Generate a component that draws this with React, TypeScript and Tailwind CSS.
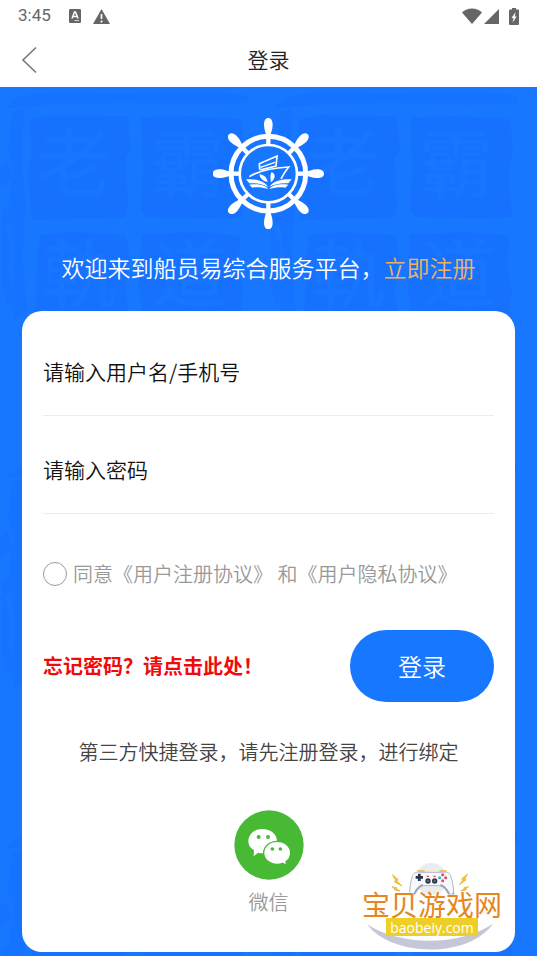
import type { ReactNode } from "react";

const HANDLES = [0, 45, 90, 135, 180, 225, 270, 315];

function StatusBar() {
  return (
    <div className="flex h-8 items-center px-[18px] font-['Roboto','Noto_Sans_CJK_SC',sans-serif] text-[17px] font-normal text-[#666]">
      <span>3:45</span>
      <svg className="ml-[18px] h-[14px] w-3" viewBox="0 0 12 14" aria-hidden="true">
        <rect width="12" height="14" rx="1.2" fill="#666" />
        <path d="M3 9.5 5.5 3h1L9 9.5M4 7.5h4" fill="none" stroke="#fff" strokeWidth="1.5" />
        <path d="M5.5 11.6H10" stroke="#fff" strokeWidth="0.8" />
      </svg>
      <svg className="ml-3 h-[15px] w-[17px]" viewBox="0 0 17 15" aria-hidden="true">
        <path d="M8.5 0 17 15H0z" fill="#666" />
        <path d="M8.5 5v5M8.5 11.4v2" stroke="#fff" strokeWidth="1.7" />
      </svg>
      <svg className="ml-auto h-4 w-5" viewBox="0 0 20 16" aria-hidden="true">
        <path d="M0 4.5C5.5-.9 14.5-.9 20 4.5L10 16z" fill="#666" />
      </svg>
      <svg className="ml-[2px] h-[15px] w-[15px]" viewBox="0 0 15 15" aria-hidden="true">
        <path d="M15 0v15H0z" fill="#666" />
      </svg>
      <svg className="ml-[10px] h-[17px] w-[10px]" viewBox="0 0 10 17" aria-hidden="true">
        <path d="M3 0h4v1.6h2a1 1 0 0 1 1 1V16a1 1 0 0 1-1 1H1a1 1 0 0 1-1-1V2.6a1 1 0 0 1 1-1h2z" fill="#666" />
        <path d="M6.6 4 2.5 10h2L3.6 14.6 7.7 8.5h-2z" fill="#fff" />
      </svg>
    </div>
  );
}

function NavBar() {
  return (
    <header className="grid h-[55px] grid-cols-[60px_1fr_60px] items-center">
      <button type="button" aria-label="返回" className="flex h-full items-center pl-[21px]">
        <svg className="h-7 w-4" viewBox="0 0 16 28" fill="none" stroke="#777" strokeWidth="1.6">
          <path d="M15 1.5 2 14l13 12.5" />
        </svg>
      </button>
      <h1 className="pb-[2px] text-center text-[21px] leading-8 text-[#222]">登录</h1>
    </header>
  );
}

// faint seal-stamp texture behind the form
function SealBackdrop() {
  return (
    <svg className="absolute inset-0 h-full w-full" aria-hidden="true">
      <defs>
        <pattern id="seal" width="269" height="370" patternUnits="userSpaceOnUse">
          <rect width="269" height="370" fill="#1877ff" />
          <path
            d="M22 8 60 5l60 2 70-3 58 4 2 8-50 2-80-2-70 2-48 4zM0 80l8-6 4 16-6 8-6 2zM2 124l10-8 2 18-9 6 7 22-4 20 7 28-9 8-4-20zM12 24l12-3-2 60 4 30-3 60 4 52-12 10-5-18 5-40-6-60 4-34-5-18z"
            fill="#1673ff"
          />
          <path
            d="m30 32 22-4 76 1 3 34-5 8 2 50-3 10-79 2-14 0-4-44 3-20zM141 30l46-1 54 3 3 28-4 30 3 40-34 2-64-2-4-8 2-40zM40 148l30-3 56 3 4 20-4 34 3 28-74 3-20-2 2-60zM141 147l58-2 42 4-3 30 5 24-3 26-68 2-30-1-3-30z"
            fill="#1671ff"
          />
          <g fill="#1775ff" stroke="#1775ff" fontSize="74" className="font-['Noto_Sans_CJK_SC',sans-serif]">
            <text x="37" y="103">老</text>
            <text x="150" y="104">霸</text>
            <text x="42" y="214">軌</text>
            <text x="153" y="214">道</text>
          </g>
        </pattern>
      </defs>
      <rect width="100%" height="100%" fill="url(#seal)" />
    </svg>
  );
}

function HelmLogo() {
  return (
    <svg className="h-[111px] w-[111px]" viewBox="39 38 333 333" fill="none" stroke="#fff" role="img" aria-label="船员易">
      <circle cx="205" cy="205" r="112" strokeWidth="15" />
      <circle cx="205" cy="205" r="86" strokeWidth="8" />
      {HANDLES.map((deg) => (
        <g key={deg} transform={`rotate(${deg} 205 205)`}>
          <path d="M205 86v32" strokeWidth="13" />
          <path
            d="M199 96c0-12-7-22-7-38 0-12 5-20 13-20s13 8 13 20c0 16-7 26-7 38z"
            fill="#fff"
            stroke="none"
          />
        </g>
      ))}
      <path d="m179 192-1-17 53-23-3 30-49 12" strokeWidth="5" />
      <path d="m181 186 44-15" strokeWidth="4" />
      <path d="M148 214c24-16 62-25 118-29-10 12-16 22-23 36" strokeWidth="5" />
      <path d="M178 207c14 2 22 8 25 23-14-3-23-10-25-23zM214 201c15 3 12 23-2 30 1-10-3-18 2-30z" fill="#fff" stroke="none" />
      <g fill="#fff" stroke="none">
        <path d="M138 222c24-2 54 2 67 23-18-10-37-13-57-11z" />
        <path d="M148 238c23-3 45-1 57 13-18-5-32-6-48-4z" />
        <path d="M275 222c-24-2-54 2-67 23 18-10 37-13 57-11z" />
        <path d="M265 238c-23-3-45-1-57 13 18-5 32-6 48-4z" />
      </g>
    </svg>
  );
}

function Field({ id, label, type = "text" }: { id: string; label: string; type?: string }) {
  return (
    <input
      id={id}
      name={id}
      type={type}
      aria-label={label}
      placeholder={label}
      className="block h-[85px] w-full border-b border-[#ececec] bg-transparent pb-1 text-[21px] text-[#111] outline-none placeholder:text-[#111] placeholder:opacity-100"
    />
  );
}

function Agreement({ children }: { children: ReactNode }) {
  return (
    <a href="#agreement" className="text-[#999]">
      {children}
    </a>
  );
}

function WechatIcon() {
  return (
    <svg className="h-[70px] w-[70px]" viewBox="0 0 210 210" aria-hidden="true">
      <circle cx="105" cy="105" r="104" fill="#48b934" />
      <path
        d="M85 57c25 0 44 16 44 36s-19 37-44 37c-5 0-9-1-13-2l-13 11 1-18C49 115 43 105 43 94c0-21 18-37 42-37z"
        fill="#fff"
      />
      <path
        d="M129 94c24 0 41 15 41 35 0 11-5 20-14 26l2 12-12-7c-5 2-11 3-17 3-22 0-40-15-40-34s18-35 40-35z"
        fill="#fff"
        stroke="#48b934"
        strokeWidth="4"
      />
      <g fill="#48b934">
        <circle cx="74" cy="81" r="6" />
        <circle cx="102" cy="81" r="6" />
        <circle cx="115" cy="117" r="5.5" />
        <circle cx="139" cy="117" r="5.5" />
      </g>
    </svg>
  );
}

function SiteBadge() {
  return (
    <div className="absolute right-[35px] bottom-1 flex w-[140px] flex-col items-center">
      <svg className="absolute inset-x-0 bottom-0 h-[90px] w-[140px]" viewBox="0 0 420 270" aria-hidden="true">
        <circle cx="208" cy="51" r="48" fill="#ececee" />
        <path
          d="M152 40c4-9 14-11 24-9h66c11-2 20 0 24 10 6 18 9 36 9 54 0 8-8 10-13 4-8-12-16-26-28-28h-50c-12 2-20 16-28 28-5 6-13 4-13-4 0-18 3-38 9-55z"
          fill="#f7f8fc"
          stroke="#b4b8c8"
          strokeWidth="3"
        />
        <path
          d="M144 92c0 12 8 12 14 2 6-12 14-22 25-25M274 92c0 12-8 12-14 2-6-12-14-22-25-25"
          fill="none"
          stroke="#a0a4b8"
          strokeWidth="6"
        />
        <path d="M166 27h22M232 27h22" stroke="#edb640" strokeWidth="5" />
        <path d="M172 35v22M161 46h22" stroke="#26364c" strokeWidth="8" />
        <g stroke="#26364c" strokeWidth="4" fill="#52667b">
          <circle cx="198" cy="57" r="6" />
          <circle cx="218" cy="57" r="6" />
        </g>
        <path d="M194 43h7M214 43h7" stroke="#ef4455" strokeWidth="4" />
        <circle cx="242" cy="38" r="4.5" fill="#e54661" />
        <circle cx="242" cy="56" r="4.5" fill="#e54661" />
        <circle cx="233" cy="47" r="4.5" fill="#2eb1bc" />
        <circle cx="251" cy="47" r="4.5" fill="#e54661" />
        <path
          d="m91 38 17 14-2 6 14 14-22-12 2-6zM90 74l14 3v4l10 6-16-3-1-4zM317 36l-18 14 3 5-10 13 20-14-3-5zM320 74l-14 3v4l-10 6 16-3 1-4z"
          fill="#f8c62e"
          stroke="#eaa72b"
          strokeWidth="2"
        />
        <path d="M15 187c100 66 276 66 378-2-72 103-302 103-378 2z" fill="#c5c7d7" />
      </svg>
      <span className="relative text-[28px] leading-7 font-normal whitespace-nowrap text-[#e6871d] [text-shadow:0_0_2px_#fff,0_0_2px_#fff]">
        宝贝游戏网
      </span>
      <span className="relative mb-4 flex h-[18px] items-center bg-[#edcf28] px-1 font-['Open_Sans',sans-serif] text-[14px] font-medium text-white">
        baobeiy.com
      </span>
    </div>
  );
}

export default function App() {
  return (
    <div className="flex min-h-screen flex-col bg-white font-['Noto_Sans_CJK_SC',sans-serif] font-[350]">
      <StatusBar />
      <NavBar />
      <main className="relative flex-1 bg-[#1877ff] px-[22px] pt-[31px] pb-1">
        <SealBackdrop />
        <div className="relative flex flex-col items-center">
          <HelmLogo />
          <p className="mt-[22px] text-[23px] leading-8 whitespace-nowrap text-white">
            欢迎来到船员易综合服务平台，
            <a href="#register" className="text-[#efb15c]">
              立即注册
            </a>
          </p>
        </div>

        <form className="relative mt-7 rounded-[20px] bg-white px-[21px] pt-5 pb-9" onSubmit={(e) => e.preventDefault()}>
          <div className="space-y-[13px]">
            <Field id="username" label="请输入用户名/手机号" />
            <Field id="password" label="请输入密码" type="password" />
          </div>

          <div className="mt-[46px] flex items-center gap-[6px] text-[20px] leading-7 whitespace-nowrap text-[#999]">
            <input
              id="agree"
              type="checkbox"
              aria-label="同意"
              className="size-6 shrink-0 appearance-none rounded-full border border-[#999] checked:bg-[#1877ff]"
            />
            <p>
              <label htmlFor="agree">同意</label>
              <Agreement>《用户注册协议》</Agreement> 和<Agreement>《用户隐私协议》</Agreement>
            </p>
          </div>

          <div className="mt-[42px] flex items-center justify-between">
            <a href="#forgot" className="text-[20px] leading-7 font-bold text-[#f00b0b]">
              忘记密码？请点击此处！
            </a>
            <button type="submit" className="h-[72px] w-36 rounded-full bg-[#1877ff] text-[24px] text-white">
              登录
            </button>
          </div>

          <p className="mt-9 text-center text-[20px] leading-7 whitespace-nowrap text-[#444]">
            第三方快捷登录，请先注册登录，进行绑定
          </p>

          <div className="mt-11 flex justify-center">
            <button type="button" className="flex flex-col items-center gap-2 text-[20px] leading-7 text-[#999]">
              <WechatIcon />
              微信
            </button>
          </div>
        </form>

        <SiteBadge />
      </main>
    </div>
  );
}
